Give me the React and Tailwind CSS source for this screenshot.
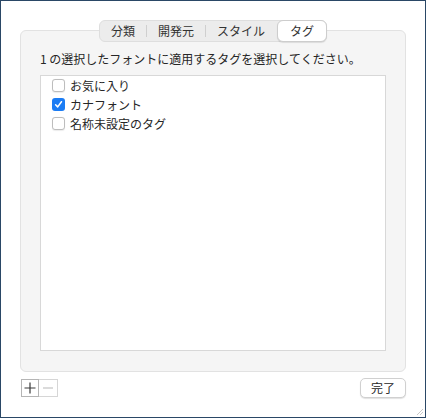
import React from 'react';

const font = { fontFamily: '"Noto Sans CJK JP", "Liberation Sans", sans-serif' };

const tabs = ['分類', '開発元', 'スタイル', 'タグ'];

const tags = [
    { label: 'お気に入り', checked: false },
    { label: 'カナフォント', checked: true },
    { label: '名称未設定のタグ', checked: false },
];

const Checkbox = ({ checked }) =>
    checked ? (
        <span className="flex items-center justify-center w-[13px] h-[13px] rounded-[3px] bg-[#1b7cf4]">
            <svg width="9" height="9" viewBox="0 0 10 10" fill="none">
                <path d="M1.8 5.3 L4.1 7.6 L8.3 1.9" stroke="white" strokeWidth="1.7" strokeLinecap="round" strokeLinejoin="round" />
            </svg>
        </span>
    ) : (
        <span className="w-[13px] h-[13px] rounded-[3px] border border-[#bdbdbd] bg-white shadow-[0_0.5px_1px_rgba(0,0,0,0.08)]" />
    );

const App = () => {
    return (
        <div
            className="w-[426px] h-[418px] border border-[#2a4766] bg-white flex flex-col px-[19px] pt-[19px] text-[#262626]"
            style={font}
        >
            <div className="flex justify-center relative z-10 -mb-[12px]">
                <div className="flex items-center h-[22px] rounded-[6px] bg-[#ececec] border border-[#dedede] text-[12px] text-[#333]">
                    {tabs.map((t, i) => {
                        const active = i === tabs.length - 1;
                        const sep = i > 0 && i < tabs.length - 1;
                        return (
                            <React.Fragment key={t}>
                                {sep && <span className="w-px h-[12px] bg-[#cfcfcf]" />}
                                <span
                                    className={
                                        active
                                            ? 'h-[22px] flex items-center px-[12px] ml-[1px] -mr-px rounded-[6px] bg-white border border-[#cdcdcd] shadow-[0_1px_1px_rgba(0,0,0,0.1)]'
                                            : 'h-[20px] flex items-center px-[11px]'
                                    }
                                >
                                    {t}
                                </span>
                            </React.Fragment>
                        );
                    })}
                </div>
            </div>

            <div className="h-[342px] rounded-[6px] border border-[#e2e2e2] bg-[#f5f5f5] flex flex-col px-[19px] pt-[20px] pb-[20px]">
                <p className="text-[12px] leading-[16px] whitespace-nowrap">1 の選択したフォントに適用するタグを選択してください。</p>
                <div className="mt-[8px] flex-1 bg-white border border-[#d8d8d8] flex flex-col pl-[11px]">
                    {tags.map((tag) => (
                        <div key={tag.label} className="h-[19px] flex items-center gap-[5px] text-[12px]">
                            <Checkbox checked={tag.checked} />
                            <span>{tag.label}</span>
                        </div>
                    ))}
                </div>
            </div>

            <div className="mt-[6px] flex items-center justify-between">
                <div className="flex h-[18px] ml-[1px] -mt-px">
                    <span className="w-[18px] h-[18px] flex items-center justify-center border border-[#b5b5b5] bg-white">
                        <svg width="12" height="12" viewBox="0 0 12 12">
                            <path d="M6 0.5 V11.5 M0.5 6 H11.5" stroke="#3a3a3a" strokeWidth="1.2" />
                        </svg>
                    </span>
                    <span className="w-[19px] h-[18px] flex items-center justify-center border border-l-0 border-[#d6d6d6] bg-white">
                        <svg width="12" height="12" viewBox="0 0 12 12">
                            <path d="M1 6 H11" stroke="#c4c4c4" strokeWidth="1.2" />
                        </svg>
                    </span>
                </div>
                <button className="w-[46px] h-[20px] rounded-[5px] bg-white border border-[#d0d0d0] shadow-[0_1px_1px_rgba(0,0,0,0.12)] text-[12px] leading-none text-[#262626] flex items-center justify-center">
                    完了
                </button>
            </div>

            <div className="flex-1 flex items-end justify-end -mr-[18px] pb-[1px]">
                <svg width="8" height="8" viewBox="0 0 8 8">
                    <path d="M7 1 L1 7 M7 4 L4 7" stroke="#c8c8c8" strokeWidth="1" />
                </svg>
            </div>
        </div>
    );
};

export default App;
